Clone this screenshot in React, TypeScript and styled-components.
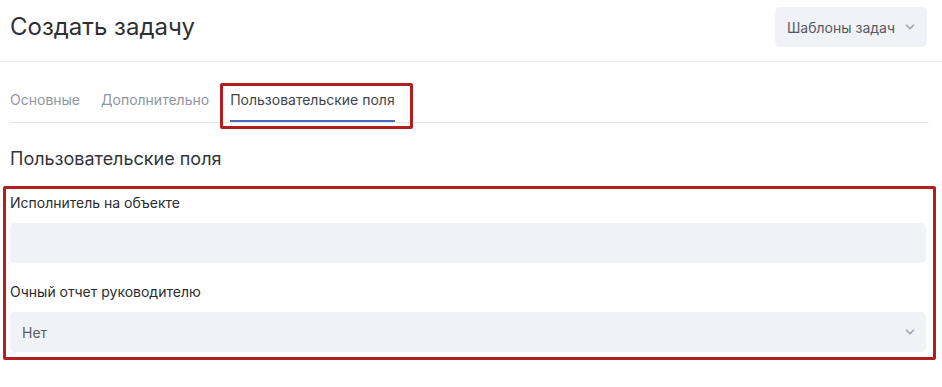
import React from "react";
import styled, { createGlobalStyle } from "styled-components";
import { ChevronDown } from "lucide-react";

const GlobalStyle = createGlobalStyle`
    body {
        margin: 0;
        background: #ffffff;
        font-family: Inter, "Noto Sans", sans-serif;
        color: #2f3033;
    }
`;

const Page = styled.div`
    width: 942px;
    padding-bottom: 28px;
`;

const Header = styled.header`
    display: flex;
    justify-content: space-between;
    align-items: center;
    padding: 7px 15px 14px 10px;
    border-bottom: 1px solid #ebebee;
`;

const Title = styled.h1`
    margin: 0;
    font-size: 24px;
    font-weight: 400;
    line-height: 32px;
    color: #2f3033;
`;

const TemplateButton = styled.button`
    display: flex;
    align-items: center;
    gap: 8px;
    height: 40px;
    padding: 0 10px 0 12px;
    border: none;
    border-radius: 5px;
    background: #f1f2f7;
    font-family: inherit;
    font-size: 14px;
    color: #555a60;
    cursor: pointer;
`;

const Body = styled.main`
    padding: 0 13px 0 10px;
`;

const Tabs = styled.nav`
    display: flex;
    gap: 21px;
    border-bottom: 1px solid #e6e7ea;
`;

const Tab = styled.div<{ $active?: boolean; $marked?: boolean }>`
    position: relative;
    padding: 28px 0 10px;
    font-size: 14px;
    line-height: 20px;
    color: ${(p) => (p.$active ? "#43464b" : "#8f96a1")};
    border-bottom: 2px solid ${(p) => (p.$active ? "#4a6cc2" : "transparent")};

    ${(p) =>
        p.$marked &&
        `
        &::after {
            content: "";
            position: absolute;
            left: -10px;
            right: -18px;
            top: 21px;
            bottom: -9px;
            border: 3px solid #b21d1d;
            border-radius: 2px;
        }
    `}
`;

const SectionTitle = styled.h2`
    margin: 24px 0 0;
    font-size: 18px;
    font-weight: 400;
    line-height: 24px;
    color: #333539;
`;

const MarkedGroup = styled.section`
    position: relative;
    margin-top: 22px;
    padding-right: 3px;
    display: flex;
    flex-direction: column;

    &::after {
        content: "";
        position: absolute;
        left: -7px;
        right: -7px;
        top: -7px;
        bottom: -8px;
        border: 3px solid #b21d1d;
        border-radius: 2px;
        pointer-events: none;
    }
`;

const Field = styled.div`
    display: flex;
    flex-direction: column;
    gap: 10px;

    & + & {
        margin-top: 19px;
    }
`;

const Label = styled.label`
    font-size: 14px;
    line-height: 20px;
    color: #2b2d30;
`;

const Input = styled.div`
    height: 40px;
    border-radius: 5px;
    background: #f1f2f7;
`;

const Select = styled.div`
    display: flex;
    align-items: center;
    justify-content: space-between;
    height: 40px;
    padding: 0 9px 0 12px;
    border-radius: 5px;
    background: #f1f2f7;
    font-size: 14px;
    color: #585c62;
`;

const tabs = [
    { label: "Основные" },
    { label: "Дополнительно" },
    { label: "Пользовательские поля", active: true },
];

export default function App() {
    return (
        <Page>
            <GlobalStyle />
            <Header>
                <Title>Создать задачу</Title>
                <TemplateButton>
                    Шаблоны задач
                    <ChevronDown size={14} strokeWidth={3} color="#a3a8b1" />
                </TemplateButton>
            </Header>
            <Body>
                <Tabs>
                    {tabs.map((t) => (
                        <Tab key={t.label} $active={t.active} $marked={t.active}>
                            {t.label}
                        </Tab>
                    ))}
                </Tabs>
                <SectionTitle>Пользовательские поля</SectionTitle>
                <MarkedGroup>
                    <Field>
                        <Label>Исполнитель на объекте</Label>
                        <Input />
                    </Field>
                    <Field>
                        <Label>Очный отчет руководителю</Label>
                        <Select>
                            Нет
                            <ChevronDown size={14} strokeWidth={3} color="#a3a8b1" />
                        </Select>
                    </Field>
                </MarkedGroup>
            </Body>
        </Page>
    );
}
